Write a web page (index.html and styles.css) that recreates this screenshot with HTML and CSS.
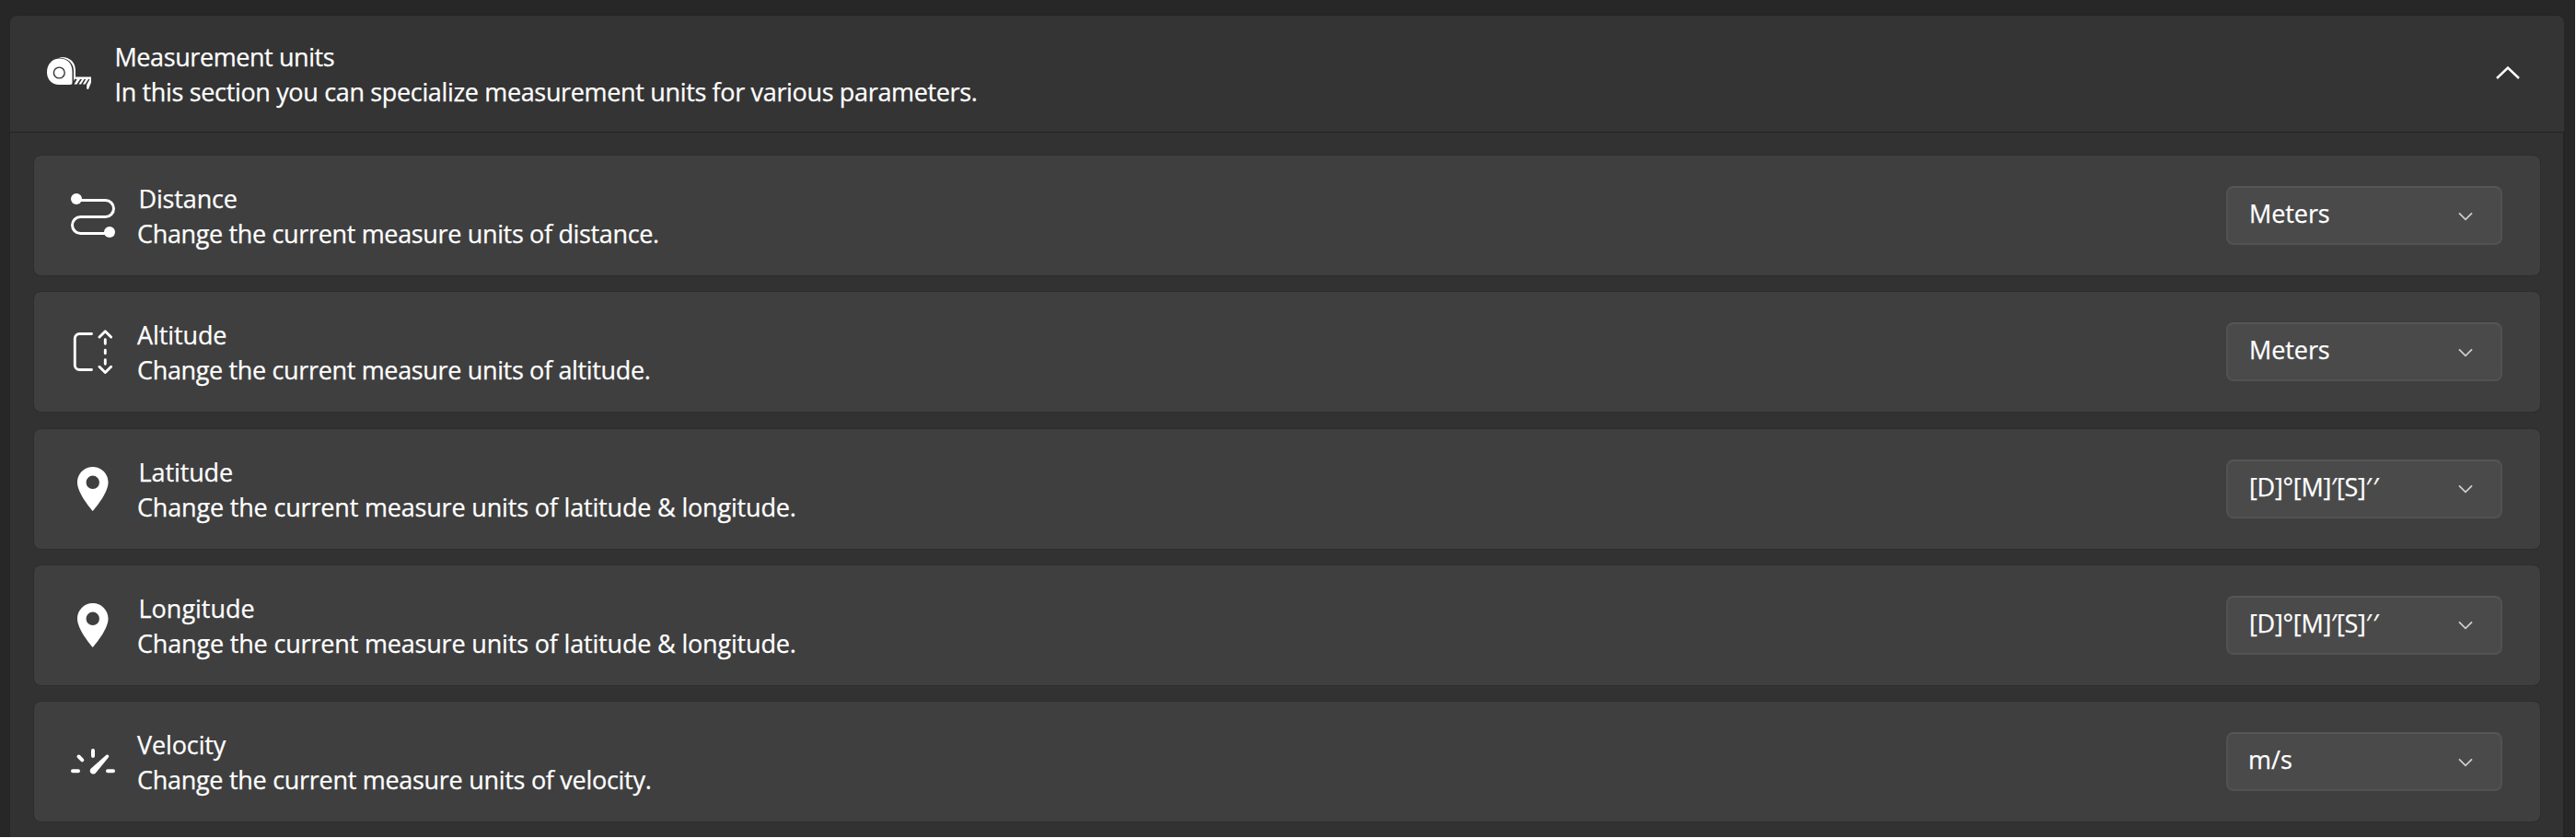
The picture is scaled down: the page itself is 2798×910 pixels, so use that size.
FILE: index.html
```html
<!DOCTYPE html>
<html lang="en">
<head>
<meta charset="utf-8">
<title>Settings</title>
<link rel="stylesheet" href="styles.css">
</head>
<body>
<section class="expander">
  <header class="expander-header">
    <svg class="icon" viewBox="0 0 48 48" fill="#fff">
      <path fill-rule="evenodd" d="M14 7.500C22 7.500 27.500 13 27.500 21.500V33.500Q27.500 36 25 36H13C5.500 36 0 30.500 0 22.500C0 13.500 6 7.500 14 7.500ZM13.300 16.400a6.600 6.600 0 1 0 0 13.200a6.600 6.600 0 1 0 0-13.200Z"/>
      <circle cx="13.3" cy="23" r="5.2"/>
      <path d="M13 6.500C22 4.500 31 10 31 20.500V28L29 32V20.500C29 12.500 22.500 6.800 13 6.500Z"/>
      <path d="M30.500 27.500H48V33.500L45 41L43.200 40.500V36L46.500 30H45L41.500 35.500H39L42.200 30H40.500L37 35.500H34.500L38 30H36L32.500 35.500H29.500L32.700 30H30.500Z"/>
    </svg>
    <div class="texts header-texts">
      <div class="line title-units">Measurement units</div>
      <div class="line tight">In this section you can specialize measurement units for various parameters.</div>
    </div>
    <svg class="chevron-up" viewBox="0 0 26 14" fill="none" stroke="#fff" stroke-width="2.5"><path d="M1 13L13 1.600L25 13"/></svg>
  </header>
  <div class="expander-body">
    <article class="card">
      <svg class="icon" viewBox="0 0 48 48" fill="none" stroke="#fff" stroke-width="3">
        <path d="M6 7.500H37.500a9 9 0 0 1 0 18H10.500a9 9 0 0 0 0 18H42"/>
        <circle cx="6" cy="6" r="6" fill="#fff" stroke="none"/><circle cx="42" cy="42" r="6" fill="#fff" stroke="none"/>
      </svg>
      <div class="texts">
        <div class="line inset title-distance">Distance</div>
        <div class="line tight">Change the current measure units of distance.</div>
      </div>
      <div class="select"><span class="value">Meters</span><svg class="chevron" viewBox="0 0 16 10"><path d="M1 1.300L8 8.300L15 1.300"/></svg></div>
    </article>
    <article class="card">
      <svg class="icon" viewBox="0 0 48 48" fill="none" stroke="#fff" stroke-width="2.9" stroke-linecap="round" stroke-linejoin="round">
        <path d="M22.500 4.500H9.300a5 5 0 0 0-5 5V38.500a5 5 0 0 0 5 5H22.500M31 8L37.300 1.700L43.600 8M31 40.200L37.300 46.500L43.600 40.200M37.300 10.700V15.200M37.300 22.300V25.700M37.300 32.800V37.300"/>
      </svg>
      <div class="texts">
        <div class="line title-altitude">Altitude</div>
        <div class="line tight">Change the current measure units of altitude.</div>
      </div>
      <div class="select"><span class="value">Meters</span><svg class="chevron" viewBox="0 0 16 10"><path d="M1 1.300L8 8.300L15 1.300"/></svg></div>
    </article>
    <article class="card">
      <svg class="icon" viewBox="2.1 2 20 20" fill="#fff"><path fill-rule="evenodd" d="M12 2C8.130 2 5 5.130 5 9c0 5.250 7 13 7 13s7-7.750 7-13c0-3.870-3.130-7-7-7zM12 6a3 3 0 1 1 0 6a3 3 0 1 1 0-6z"/></svg>
      <div class="texts">
        <div class="line inset title-latitude">Latitude</div>
        <div class="line desc-coord">Change the current measure units of latitude &amp; longitude.</div>
      </div>
      <div class="select"><span class="value coord">[D]°[M]′[S]<span class="prime">′</span>′</span><svg class="chevron" viewBox="0 0 16 10"><path d="M1 1.300L8 8.300L15 1.300"/></svg></div>
    </article>
    <article class="card">
      <svg class="icon" viewBox="2.1 2 20 20" fill="#fff"><path fill-rule="evenodd" d="M12 2C8.130 2 5 5.130 5 9c0 5.250 7 13 7 13s7-7.750 7-13c0-3.870-3.130-7-7-7zM12 6a3 3 0 1 1 0 6a3 3 0 1 1 0-6z"/></svg>
      <div class="texts">
        <div class="line inset">Longitude</div>
        <div class="line desc-coord">Change the current measure units of latitude &amp; longitude.</div>
      </div>
      <div class="select"><span class="value coord">[D]°[M]′[S]<span class="prime">′</span>′</span><svg class="chevron" viewBox="0 0 16 10"><path d="M1 1.300L8 8.300L15 1.300"/></svg></div>
    </article>
    <article class="card">
      <svg class="icon" viewBox="0 0 48 48" fill="#fff" stroke="#fff" stroke-width="4" stroke-linecap="round">
        <path d="M2 34.300H8M40 34.300H46M24 12V18M8.500 18.500L12.300 22.300"/>
        <path stroke="none" d="M38.500 16.800C40 15.600 42.200 17.700 41 19.300L27.300 36C24.500 39.500 19 36.500 21.300 32Z"/>
      </svg>
      <div class="texts">
        <div class="line title-velocity">Velocity</div>
        <div class="line desc-velocity">Change the current measure units of velocity.</div>
      </div>
      <div class="select"><span class="value speed">m/s</span><svg class="chevron" viewBox="0 0 16 10"><path d="M1 1.300L8 8.300L15 1.300"/></svg></div>
    </article>
  </div>
</section>
</body>
</html>
```

FILE: styles.css
```css
* { box-sizing: border-box; }
html { background: #fff; overflow: hidden; }
body {
  margin: 0;
  width: 2797px;
  height: 909px;
  padding: 16px 11px 0 10px;
  overflow: hidden;
  background: #272727;
  color: #fff;
  font: 27px/38px "Open Sans", "Noto Sans", sans-serif;
  -webkit-text-stroke: 0.25px #fff;
  white-space: nowrap;
}
.expander-header {
  display: flex;
  align-items: center;
  height: 128px;
  padding: 0 48px 0 40px;
  background: #343434;
  border: 1px solid #262626;
  border-top-color: #242424;
  border-bottom-color: #222;
  border-radius: 8px 8px 0 0;
}
.expander-body {
  display: flex;
  flex-direction: column;
  gap: 16.25px;
  height: 800px;
  padding: 24px 24px 0 25px;
  background: #323232;
  border: solid #242424;
  border-width: 0 2px 0 1px;
}
.card {
  display: flex;
  align-items: center;
  flex: none;
  height: 132px;
  padding: 0 41px 0 40px;
  background: #3f3f3f;
  border: 1px solid #2e2e2e;
  border-radius: 8px;
  background-clip: padding-box;
}
.icon { width: 48px; height: 48px; flex: none; }
.texts { flex: 1; margin-left: 24px; padding-top: 2px; }
.header-texts { margin-left: 25.5px; }
.line { height: 38px; }
.inset { padding-left: 1.5px; }
.tight { letter-spacing: -0.345px; }
.title-units { letter-spacing: -0.42px; }
.title-distance { letter-spacing: -0.15px; }
.title-altitude { letter-spacing: -0.1px; }
.title-latitude { letter-spacing: -0.1px; }
.title-velocity { letter-spacing: -0.12px; }
.desc-velocity { letter-spacing: -0.29px; }
.desc-coord { letter-spacing: -0.175px; }
.chevron-up { width: 26px; height: 14px; margin: 0 0 3px; }
.select {
  display: flex;
  align-items: center;
  justify-content: space-between;
  width: 300px;
  height: 64px;
  padding: 0 30px 0 23px;
  background: #4a4a4a;
  border: 2px solid #525252;
  border-top-color: #565656;
  border-radius: 8px;
}
.value { padding-bottom: 4px; letter-spacing: -0.08px; }
.coord { letter-spacing: -0.25px; }
.prime { letter-spacing: 1.5px; }
.speed { margin-left: -1px; letter-spacing: 0; }
.chevron { width: 16px; height: 10px; margin-top: 1px; fill: none; stroke: #cfcfcf; stroke-width: 1.8; }
```
